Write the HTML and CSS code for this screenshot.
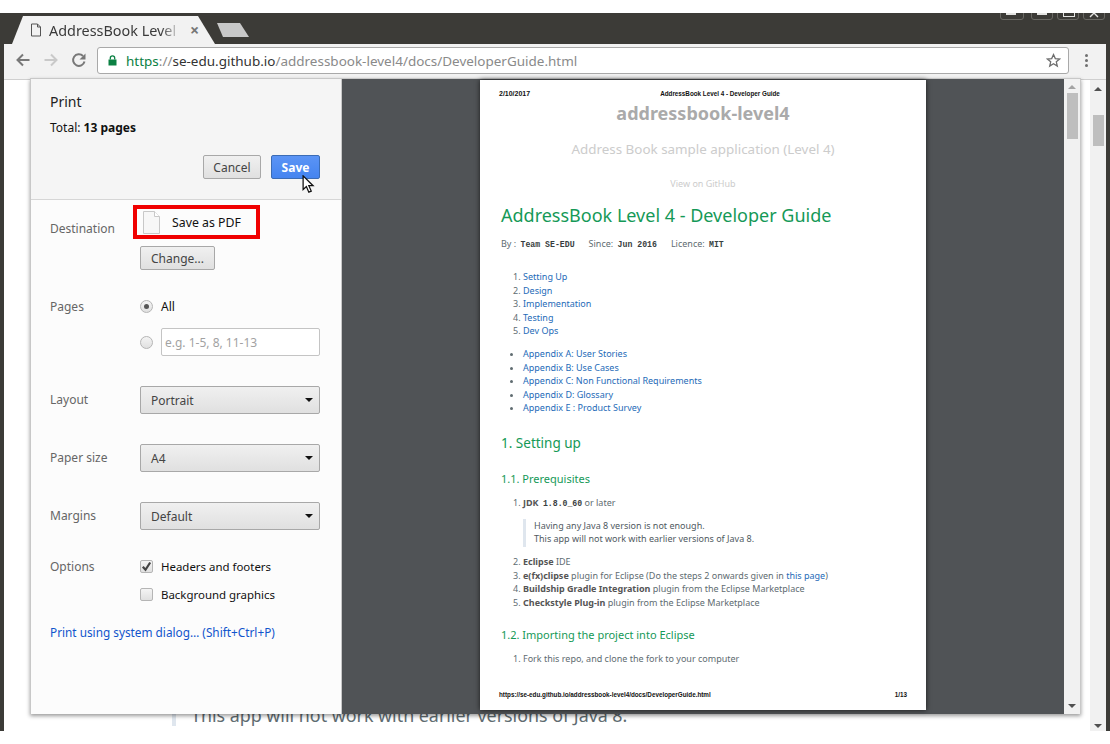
FILE: index.html
```html
<!DOCTYPE html>
<html lang="en">
<head>
    <meta charset="UTF-8">
    <title>Print</title>
    <link rel="stylesheet" href="styles.css">
</head>
<body>
<div id="window">
    <div id="titlebar">
        <div class="tab">
            <svg class="tab-icon" width="12" height="14" viewBox="0 0 12 14"><path d="M1.5 1h6l3 3v9h-9z M7.5 1v3h3" fill="none" stroke="#555" stroke-width="1"/></svg>
            <span class="tab-title">AddressBook Level</span>
            <span class="tab-close">×</span>
        </div>
        <div class="new-tab"></div>
        <div class="win-btns">
            <span class="win-btn win-dark"></span>
            <span class="win-btn"></span>
            <span class="win-btn win-outline"></span>
            <span class="win-btn win-close"><svg width="20" height="13" viewBox="0 0 20 13"><path d="M6 3l8 8 M14 3l-8 8" fill="none" stroke="#e4e4e2" stroke-width="1.4"/></svg></span>
        </div>
    </div>
    <div id="toolbar">
        <svg class="nav" width="16" height="16" viewBox="0 0 16 16"><path d="M14.5 8H3 M8 2.5L2.5 8 8 13.5" fill="none" stroke="#787878" stroke-width="2"/></svg>
        <svg class="nav" width="16" height="16" viewBox="0 0 16 16"><path d="M1.5 8H13 M8 2.5L13.5 8 8 13.5" fill="none" stroke="#c9c9c9" stroke-width="2"/></svg>
        <svg class="nav" width="16" height="16" viewBox="0 0 16 16"><path d="M13.5 9.5A5.8 5.8 0 1 1 12 4" fill="none" stroke="#787878" stroke-width="2"/><path d="M14.5 1.5v6h-6z" fill="#787878"/></svg>
        <div class="omnibox">
            <svg class="lock" width="9" height="11" viewBox="0 0 9 11"><path d="M0.5 4.5h8v6h-8z" fill="#0b8043"/><path d="M2.3 4.5V3a2.2 2.2 0 0 1 4.4 0v1.5" fill="none" stroke="#0b8043" stroke-width="1.3"/></svg>
            <span class="url"><span class="url-https">https</span><span class="url-dim">://</span><span class="url-host">se-edu.github.io</span><span class="url-dim">/addressbook-level4/docs/DeveloperGuide.html</span></span>
            <svg class="star" width="15" height="15" viewBox="0 0 15 15"><path d="M7.5 1.6l1.8 4 4.3.4-3.3 2.8 1 4.3-3.8-2.3-3.8 2.3 1-4.3L1.4 6l4.3-.4z" fill="none" stroke="#6e6e6e" stroke-width="1.3"/></svg>
        </div>
        <div class="kebab"><i></i><i></i><i></i></div>
    </div>
    <div id="page">
        <div class="page-quote">This app will not work with earlier versions of Java 8.</div>
        <div class="page-scroll">
            <div class="arrow-up"></div>
            <div class="page-thumb"></div>
            <div class="page-track"></div>
            <div class="arrow-down"></div>
        </div>
    </div>
</div>

<div id="dialog">
    <div id="sidebar">
        <div class="side-head">
            <div class="print-title">Print</div>
            <div class="print-total">Total: <b>13 pages</b></div>
            <div class="head-btns">
                <button class="btn btn-cancel">Cancel</button>
                <button class="btn btn-save">Save</button>
            </div>
        </div>
        <div class="settings">
            <div class="row row-dest">
                <div class="label">Destination</div>
                <div class="field">
                    <div class="dest-box">
                        <svg width="17" height="23" viewBox="0 0 17 23"><path d="M0.5 0.5h11l5 5v17h-16z" fill="#f7f7f7" stroke="#c8c8c8"/><path d="M11.5 0.5v5h5" fill="#fff" stroke="#c8c8c8"/></svg>
                        <span>Save as PDF</span>
                    </div>
                    <button class="btn btn-change">Change...</button>
                </div>
            </div>
            <div class="row row-pages">
                <div class="label">Pages</div>
                <div class="field">
                    <div class="opt"><span class="radio radio-on"></span><span>All</span></div>
                    <div class="opt opt-range"><span class="radio"></span><div class="range-input">e.g. 1-5, 8, 11-13</div></div>
                </div>
            </div>
            <div class="row row-select">
                <div class="label">Layout</div>
                <div class="select">Portrait</div>
            </div>
            <div class="row row-select">
                <div class="label">Paper size</div>
                <div class="select">A4</div>
            </div>
            <div class="row row-select">
                <div class="label">Margins</div>
                <div class="select">Default</div>
            </div>
            <div class="row row-options">
                <div class="label">Options</div>
                <div class="field">
                    <div class="opt opt-check">
                        <span class="check"><svg width="13" height="13" viewBox="0 0 13 13"><path d="M2.8 6.8l2.7 3 4.7-7.3" fill="none" stroke="#444" stroke-width="2.2"/></svg></span>
                        <span>Headers and footers</span>
                    </div>
                    <div class="opt opt-check"><span class="check"></span><span>Background graphics</span></div>
                </div>
            </div>
            <div class="system-link">Print using system dialog… (Shift+Ctrl+P)</div>
        </div>
    </div>
    <div id="preview">
        <div class="paper">
            <div class="paper-head"><span class="paper-date">2/10/2017</span><span class="paper-head-title">AddressBook Level 4 - Developer Guide</span></div>
            <div class="doc-name">addressbook-level4</div>
            <div class="doc-sub">Address Book sample application (Level 4)</div>
            <div class="doc-view">View on GitHub</div>
            <div class="doc-title">AddressBook Level 4 - Developer Guide</div>
            <div class="doc-by">By : <code>Team SE-EDU</code><span class="gap"></span>Since: <code>Jun 2016</code><span class="gap"></span>Licence: <code>MIT</code></div>
            <ol class="toc">
                <li><a>Setting Up</a></li>
                <li><a>Design</a></li>
                <li><a>Implementation</a></li>
                <li><a>Testing</a></li>
                <li><a>Dev Ops</a></li>
            </ol>
            <ul class="toc toc-ul">
                <li><a>Appendix A: User Stories</a></li>
                <li><a>Appendix B: Use Cases</a></li>
                <li><a>Appendix C: Non Functional Requirements</a></li>
                <li><a>Appendix D: Glossary</a></li>
                <li><a>Appendix E : Product Survey</a></li>
            </ul>
            <div class="doc-h2">1. Setting up</div>
            <div class="doc-h3">1.1. Prerequisites</div>
            <ol class="toc toc-jdk">
                <li><b>JDK</b> <code>1.8.0_60</code> or later</li>
            </ol>
            <div class="doc-quote">Having any Java 8 version is not enough.<br>This app will not work with earlier versions of Java 8.</div>
            <ol class="toc toc-tools" start="2">
                <li><b>Eclipse</b> IDE</li>
                <li><b>e(fx)clipse</b> plugin for Eclipse (Do the steps 2 onwards given in <a>this page</a>)</li>
                <li><b>Buildship Gradle Integration</b> plugin from the Eclipse Marketplace</li>
                <li><b>Checkstyle Plug-in</b> plugin from the Eclipse Marketplace</li>
            </ol>
            <div class="doc-h3 doc-h3-import">1.2. Importing the project into Eclipse</div>
            <ol class="toc toc-fork">
                <li>Fork this repo, and clone the fork to your computer</li>
            </ol>
            <div class="paper-foot"><span>https://se-edu.github.io/addressbook-level4/docs/DeveloperGuide.html</span><span>1/13</span></div>
        </div>
    </div>
    <div class="dialog-scroll">
        <div class="arrow-up arrow-light"></div>
        <div class="dialog-thumb"></div>
        <div class="page-track"></div>
        <div class="arrow-down"></div>
    </div>
</div>

<svg id="cursor" width="14" height="19" viewBox="0 0 15 21"><path d="M1 1v15l3.6-3.3 2.7 6.3 2.7-1.2-2.7-6h4.7z" fill="#fff" stroke="#111" stroke-width="1.4"/></svg>
</body>
</html>
```

FILE: styles.css
```css
*{
    margin: 0;
    padding: 0;
    box-sizing: border-box;
}
body{
    width: 1110px;
    height: 744px;
    overflow: hidden;
    background: #fff;
    font-family: "Noto Sans", "Open Sans", sans-serif;
    position: relative;
}
#window{
    margin-top: 13px;
    height: 718px;
    border-left: 4px solid #3c3b37;
    border-right: 4px solid #3c3b37;
    display: flex;
    flex-direction: column;
    background: #3c3b37;
    position: absolute;
    top: 0;
    left: 0;
    width: 1110px;
}

/* tabs */
#titlebar{
    height: 31px;
    display: flex;
    align-items: flex-end;
    flex-shrink: 0;
    position: relative;
    padding-left: 8px;
    overflow: hidden;
}
.tab{
    width: 208px;
    height: 28px;
    background: #f2f2f2;
    clip-path: polygon(0 100%, 11px 0, 186px 0, 203px 100%);
    display: flex;
    align-items: center;
    padding: 0 0 0 18px;
}
.tab-icon{
    flex-shrink: 0;
}
.tab-title{
    margin-left: 7px;
    width: 138px;
    white-space: nowrap;
    font-size: 14.4px;
    color: #3a3a3a;
    -webkit-mask-image: linear-gradient(to right, #000 112px, transparent 132px);
    mask-image: linear-gradient(to right, #000 112px, transparent 132px);
}
.tab-close{
    margin-left: 3px;
    font-size: 16px;
    color: #777;
    font-weight: bold;
}
.new-tab{
    width: 32px;
    height: 14px;
    margin: 0 0 7px -3px;
    background: #c8c8c8;
    clip-path: polygon(0 0, 23px 0, 32px 100%, 6px 100%);
}
.win-btns{
    position: absolute;
    top: -8px;
    right: 1px;
    display: flex;
    gap: 4px;
}
.win-btn{
    width: 22px;
    height: 15px;
    border: 1px solid #6a6964;
    border-radius: 3px;
    background: #3c3b37;
    position: relative;
}
.win-btn::after{
    content: "";
    position: absolute;
    left: 5px;
    top: 7px;
    width: 10px;
    height: 2px;
    background: #e4e4e2;
}
.win-dark{
    width: 24px;
    margin-right: 3px;
}
.win-outline::after{
    background: none;
    border: 1px solid #e4e4e2;
    height: 5px;
    top: 4px;
}
.win-close::after{
    display: none;
}
.win-close svg{
    display: block;
}

/* toolbar */
#toolbar{
    height: 36px;
    background: #f2f2f2;
    border-bottom: 1px solid #cfcfcf;
    display: flex;
    align-items: center;
    padding: 0 0 3px 11px;
    flex-shrink: 0;
}
.nav{
    margin-right: 12px;
    flex-shrink: 0;
}
.nav:nth-child(3){
    margin-right: 10px;
}
.omnibox{
    width: 972px;
    height: 27px;
    background: #fff;
    border: 1px solid #a9a9a9;
    border-radius: 3px;
    display: flex;
    align-items: center;
    padding: 0 7px 0 10px;
}
.lock{
    flex-shrink: 0;
}
.url{
    margin-left: 9px;
    font-size: 13.47px;
    white-space: nowrap;
    flex: 1;
    padding-top: 1px;
}
.url-https{
    color: #0b8043;
}
.url-dim{
    color: #8a8a8a;
}
.url-host{
    color: #333;
}
.kebab{
    margin-left: 16px;
    display: flex;
    flex-direction: column;
    gap: 2px;
}
.kebab i{
    display: block;
    width: 3px;
    height: 3px;
    border-radius: 50%;
    background: #707070;
}

/* page behind the dialog */
#page{
    flex: 1;
    background: #fff;
    position: relative;
    display: flex;
    justify-content: flex-end;
    overflow: hidden;
}
.page-quote{
    position: absolute;
    left: 168px;
    top: 623px;
    height: 23px;
    border-left: 4px solid #dfe6ee;
    padding-left: 15px;
    font-size: 17.85px;
    line-height: 25px;
    color: #606c71;
    white-space: nowrap;
}
.page-scroll{
    width: 16px;
    background: #f1f1f1;
    display: flex;
    flex-direction: column;
    align-items: center;
    padding: 7px 0 3px;
}
.page-thumb{
    width: 11px;
    height: 31px;
    margin-top: 24px;
    background: #bebebe;
}
.page-track{
    flex: 1;
}
.arrow-up{
    width: 0;
    height: 0;
    border-left: 4px solid transparent;
    border-right: 4px solid transparent;
    border-bottom: 4px solid #505050;
}
.arrow-light{
    border-bottom-color: #a3a3a3;
}
.arrow-down{
    width: 0;
    height: 0;
    border-left: 4px solid transparent;
    border-right: 4px solid transparent;
    border-top: 4px solid #505050;
}

/* print dialog */
#dialog{
    position: absolute;
    left: 30px;
    top: 78px;
    width: 1051px;
    height: 636px;
    display: flex;
    box-shadow: 0 2px 4px rgba(0,0,0,.4);
    border: 1px solid #c8c8c8;
    border-width: 1px 1px 0 1px;
}
#sidebar{
    width: 312px;
    margin-left: -1px;
    background: #fcfcfc;
    border-left: 1px solid #c8c8c8;
    border-right: 1px solid #c8c8c8;
    flex-shrink: 0;
    display: flex;
    flex-direction: column;
}
.side-head{
    height: 121px;
    background: #f5f5f5;
    border-bottom: 1px solid #d6d6d6;
    padding: 13px 21px 0 19px;
}
.print-title{
    font-size: 14px;
    line-height: 20px;
    color: #222;
}
.print-total{
    margin-top: 7px;
    font-size: 12px;
    line-height: 18px;
    color: #111;
}
.head-btns{
    margin-top: 18px;
    display: flex;
    justify-content: flex-end;
    gap: 10px;
}
.btn{
    height: 24px;
    border: 1px solid #a8a8a8;
    border-radius: 2px;
    background: linear-gradient(#f0f0f0, #e0e0e0);
    font-family: "Noto Sans", "Open Sans", sans-serif;
    font-size: 12px;
    color: #444;
    padding: 0 11px;
}
.btn-cancel{
    width: 58px;
    padding: 0;
}
.btn-save{
    width: 49px;
    padding: 0;
    background: linear-gradient(#5b94f5, #4484f0);
    border-color: #3b6cb5;
    color: #fff;
    font-weight: bold;
}
.settings{
    flex: 1;
    padding: 0 21px 0 19px;
}
.row{
    display: flex;
}
.label{
    width: 90px;
    flex-shrink: 0;
    font-size: 12px;
    line-height: 16px;
    color: #666;
}
.field{
    flex: 1;
    display: flex;
    flex-direction: column;
}
.row-dest{
    padding-top: 5px;
}
.row-dest .label{
    padding-top: 16px;
}
.dest-box{
    width: 127px;
    height: 34px;
    margin-left: -7px;
    border: 4px solid #f00000;
    display: flex;
    align-items: center;
    padding-left: 6px;
    font-size: 12.3px;
    color: #111;
}
.dest-box svg{
    flex-shrink: 0;
}
.dest-box span{
    margin-left: 12px;
    white-space: nowrap;
}
.btn-change{
    width: 75px;
    margin-top: 7px;
    padding: 0;
}
.row-pages{
    margin-top: 27px;
}
.row-pages .label{
    padding-top: 2px;
}
.opt{
    display: flex;
    align-items: center;
    gap: 8px;
    height: 18px;
    font-size: 12px;
    color: #111;
}
.opt-range{
    height: 28px;
    margin-top: 13px;
}
.radio{
    width: 13px;
    height: 13px;
    border-radius: 50%;
    border: 1px solid #b5b5b5;
    background: linear-gradient(#f4f4f4, #e0e0e0);
    flex-shrink: 0;
    display: flex;
    align-items: center;
    justify-content: center;
}
.radio-on::after{
    content: "";
    width: 5px;
    height: 5px;
    border-radius: 50%;
    background: #555;
}
.range-input{
    flex: 1;
    height: 28px;
    border: 1px solid #c4c4c4;
    border-radius: 2px;
    background: #fff;
    padding: 1px 0 0 3px;
    line-height: 26px;
    color: #a2a2a2;
}
.row-select{
    height: 28px;
    align-items: center;
    margin-top: 30px;
}
.row-select .label{
    margin-top: -1px;
}
.select{
    flex: 1;
    height: 28px;
    border: 1px solid #a8a8a8;
    border-radius: 2px;
    background: linear-gradient(#f0f0f0, #e0e0e0);
    font-size: 12px;
    line-height: 27px;
    color: #444;
    padding-left: 10px;
    position: relative;
}
.select::after{
    content: "";
    position: absolute;
    right: 6px;
    top: 11px;
    border-left: 4px solid transparent;
    border-right: 4px solid transparent;
    border-top: 4px solid #111;
}
.row-options{
    margin-top: 27px;
}
.row-options .label{
    padding-top: 2px;
}
.opt-check{
    margin-bottom: 10px;
    font-size: 11.45px;
}
.check{
    width: 13px;
    height: 13px;
    border: 1px solid #b5b5b5;
    border-radius: 2px;
    background: linear-gradient(#f4f4f4, #e0e0e0);
    flex-shrink: 0;
    position: relative;
}
.check svg{
    position: absolute;
    left: -1px;
    top: -1px;
}
.system-link{
    margin-top: 11px;
    font-size: 11.8px;
    line-height: 16px;
    color: #1155cc;
    white-space: nowrap;
}

/* preview and paper */
#preview{
    flex: 1;
    background: #505356;
    display: flex;
    justify-content: center;
    padding-top: 1px;
    min-width: 0;
}
.paper{
    width: 446px;
    height: 630px;
    background: #fff;
    box-shadow: 0 0 5px rgba(0,0,0,.7);
    padding: 0 21px 0 21px;
    font-size: 9px;
    line-height: 13.5px;
    color: #606c71;
    position: relative;
}
.paper-head{
    display: flex;
    height: 13px;
    margin: 7px 0 0 -2px;
    font-family: "Liberation Sans", sans-serif;
    font-size: 6.3px;
    font-weight: bold;
    line-height: 13px;
    color: #111;
    white-space: nowrap;
}
.paper-date{
    font-size: 7px;
}
.paper-head-title{
    margin-left: 130px;
}
.doc-name{
    margin-top: 1px;
    text-align: center;
    font-size: 18px;
    font-weight: bold;
    line-height: 24px;
    color: #aaa;
}
.doc-sub{
    margin-top: 15px;
    text-align: center;
    font-size: 13.4px;
    line-height: 18px;
    color: #ccc;
}
.doc-view{
    margin-top: 19px;
    text-align: center;
    line-height: 14px;
    color: #ccc;
}
.doc-title{
    margin-top: 11px;
    font-size: 18px;
    line-height: 26px;
    color: #159957;
    white-space: nowrap;
}
.doc-by{
    margin-top: 9px;
    line-height: 14px;
}
.doc-by code, .toc code{
    font-family: "Liberation Mono", "DejaVu Sans Mono", monospace;
    font-size: 8.2px;
    font-weight: bold;
    color: #383e41;
    margin-left: 2px;
}
.gap{
    display: inline-block;
    width: 14px;
}
.toc{
    padding-left: 22px;
    line-height: 13.5px;
    white-space: nowrap;
}
.toc li::marker{
    color: #606c71;
}
.toc a{
    color: #1e6bb8;
}
.toc b{
    color: #555;
}
.doc-by + .toc{
    margin-top: 18px;
}
.toc-ul{
    margin-top: 9.5px;
}
.doc-h2{
    margin-top: 18px;
    font-size: 13.5px;
    line-height: 20px;
    color: #159957;
}
.doc-h3{
    margin-top: 18px;
    font-size: 11px;
    line-height: 16px;
    color: #159957;
}
.toc-jdk{
    margin-top: 9px;
}
.doc-quote{
    margin: 9px 0 8px 22px;
    padding-left: 8px;
    border-left: 3px solid #dfe6ee;
    line-height: 13px;
    height: 28px;
    color: #505a5f;
    white-space: nowrap;
}
.doc-h3-import{
    margin-top: 18px;
}
.toc-fork{
    margin-top: 9px;
}
.paper-foot{
    position: absolute;
    left: 19px;
    right: 19px;
    top: 609px;
    display: flex;
    justify-content: space-between;
    font-family: "Liberation Sans", sans-serif;
    font-size: 6.3px;
    font-weight: bold;
    line-height: 12px;
    color: #111;
}
.dialog-scroll{
    width: 16px;
    background: #f1f1f1;
    display: flex;
    flex-direction: column;
    align-items: center;
    padding: 6px 0 6px;
    flex-shrink: 0;
}
.dialog-thumb{
    width: 11px;
    height: 46px;
    margin-top: 4px;
    background: #bebebe;
}
#cursor{
    position: absolute;
    left: 302px;
    top: 175px;
}
```
